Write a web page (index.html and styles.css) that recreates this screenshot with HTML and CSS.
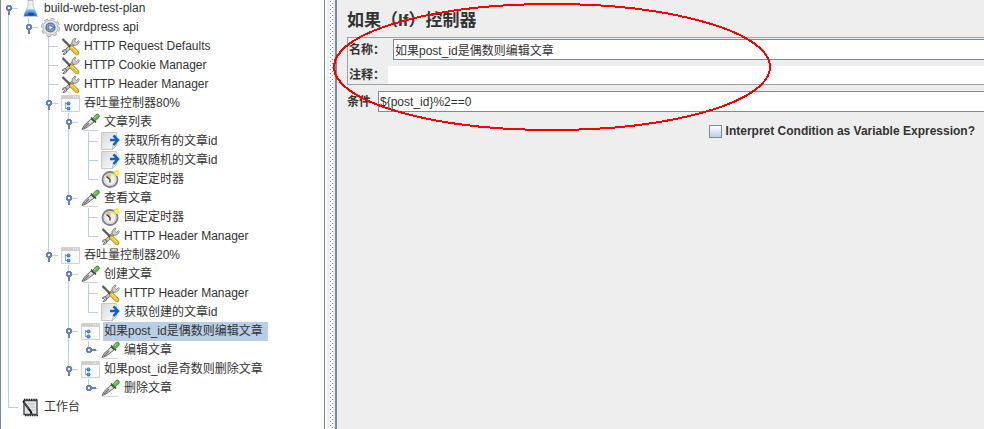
FILE: index.html
```
<!DOCTYPE html>
<html lang="zh-CN">
<head>
    <meta charset="UTF-8">
    <meta name="viewport" content="width=device-width, initial-scale=1.0">
    <title>build-web-test-plan</title>
    <link rel="stylesheet" href="styles.css">
</head>
<body>
    <!-- icon set -->
    <svg class="sprite" aria-hidden="true">
        <defs>
            <linearGradient id="page-fill" x1="0" y1="0" x2="1" y2="1">
                <stop offset="0" stop-color="#d8d8d8"/>
                <stop offset="1" stop-color="#ffffff"/>
            </linearGradient>
            <linearGradient id="flask-fill" x1="0" y1="0" x2="0" y2="1">
                <stop offset="0" stop-color="#8fc0f4"/>
                <stop offset="1" stop-color="#1767cf"/>
            </linearGradient>
        </defs>
        <symbol id="flask" viewBox="0 0 20 19">
            <path d="M3 17h14l1 1H2z" fill="#ccc"/>
            <path d="M7 1h5v6l4 9q0 1-1 1H4q-1 0-1-1l4-9z" fill="#edf2f7" stroke="#bcc8d4"/>
            <path d="M6 10h7l3 6q0 1-1 1H4q-1 0-1-1z" fill="url(#flask-fill)"/>
            <path d="M6 11q3-2 7 0" fill="none" stroke="#b9dafb"/>
            <ellipse cx="10" cy="15" rx="3" ry="1.5" fill="#0b4eae"/>
            <path d="M7 1h5" stroke="#9aa5b0"/>
        </symbol>
        <symbol id="gear" viewBox="0 0 20 19">
            <circle cx="9.5" cy="9.5" r="8" fill="none" stroke="#999" stroke-width="3" stroke-dasharray="3.6 2.68"/>
            <circle cx="9.5" cy="9.5" r="7.5" fill="#e6e6e6" stroke="#aaa"/>
            <circle cx="9.5" cy="9.5" r="8" fill="none" stroke="#dcdcdc" stroke-width="1.6" stroke-dasharray="3 3.28" stroke-dashoffset="-.3"/>
            <circle cx="9.5" cy="9.5" r="4.5" fill="#7fa0cc" stroke="#56698a" stroke-width="1.2"/>
            <path d="M8 7l4.5 2.5L8 12z" fill="#fff" stroke="#234f8e" stroke-width=".6"/>
        </symbol>
        <symbol id="tools" viewBox="0 0 20 19">
            <path d="M4 15L13 6" stroke="#666" stroke-width="3.4"/>
            <path d="M4 15L13 6" stroke="#c9c9c9" stroke-width="1.8"/>
            <path d="M11 7q-1-4 3-6l1 .5L13.5 4l2 1.5 2-2 .7 1q-1 4-5 3.8z" fill="#d0d0d0" stroke="#777" stroke-width=".8"/>
            <path d="M1 14.5q2-3 4-1.5 1.5 2-.5 4-1 .8-2.5.5l1.5-2-1-1z" fill="#ccc" stroke="#555" stroke-width=".8"/>
            <path d="M1.5 2l8 8" stroke="#222" stroke-width="2"/>
            <path d="M1.5 2l7 7" stroke="#ddd" stroke-width=".6"/>
            <path d="M10.5 10.5L16 16" stroke="#946d08" stroke-width="4.4" stroke-linecap="round"/>
            <path d="M10.5 10.5L16 16" stroke="#f6c526" stroke-width="3.2" stroke-linecap="round"/>
            <path d="M11 10l5 5" stroke="#ffe98d" stroke-width=".8"/>
        </symbol>
        <symbol id="controller" viewBox="0 0 20 19">
            <path d="M.5 1.5h18v16H.5z" fill="#fafafa" stroke="#d2d2d2"/>
            <path d="M1 2h17v3H1z" fill="#cfcfcf"/>
            <path d="M12 3h1M14 3h1M16 3h1" stroke="#fff"/>
            <path d="M4.5 8v7M4.5 9.5h2M4.5 14.5h2" fill="none" stroke="#98a6b8"/>
            <circle cx="7.5" cy="9.5" r="2" fill="#2e7ad6"/>
            <circle cx="7.5" cy="14.5" r="2" fill="#2e7ad6"/>
            <path d="M6.5 9h2M6.5 14h2" stroke="#a7cdf6" stroke-width=".8"/>
        </symbol>
        <symbol id="dropper" viewBox="0 0 20 19">
            <path d="M2 17.5h15" stroke="#d4d4d4"/>
            <path d="M1 16.5L3 12.5 10 6l3 3-8 6z" fill="#dedede" stroke="#666"/>
            <path d="M3 15L8 10" stroke="#777" stroke-width="1.5"/>
            <path d="M10 4.5l5 5" stroke="#24442a" stroke-width="1.6"/>
            <path d="M11.5 5.5L15 1.5q2-1 3 .5t-.5 3L14 8z" fill="#62b54a" stroke="#3c7f31" stroke-width=".8"/>
            <path d="M13.5 5L16 2.5" stroke="#b7e3a8"/>
        </symbol>
        <symbol id="sampler" viewBox="0 0 20 19">
            <path d="M.5 .5h15v13l-4 4H.5z" fill="url(#page-fill)" stroke="#c8c8c8"/>
            <path d="M11.5 17.5l.5-4.5 3.5.5z" fill="#eee" stroke="#aaa" stroke-width=".7"/>
            <path d="M9 8h7M12.5 3.5L17 8l-4.5 5" fill="none" stroke="#0c62cf" stroke-width="2.6"/>
        </symbol>
        <symbol id="timer" viewBox="0 0 20 19">
            <circle cx="9" cy="9.5" r="7.5" fill="#f1f0e8" stroke="#7c7c90" stroke-width="1.8"/>
            <circle cx="9" cy="9.5" r="5.8" fill="none" stroke="#cfcfcf"/>
            <path d="M9 9.5L5 5q4-2.5 5 0z" fill="#e4c76a"/>
            <path d="M5.5 6.5L9 9.5v3" fill="none" stroke="#333" stroke-width="1.2"/>
            <path d="M15.5 0v6M12.5 3h6M13.5 1l4 4M17.5 1l-4 4" stroke="#f9ea10" stroke-width="1.6"/>
            <circle cx="15.5" cy="3" r="1.2" fill="#fffbb0"/>
        </symbol>
        <symbol id="notepad" viewBox="0 0 20 19">
            <path d="M3 2.5h13v14H3z" fill="#e3e5e8" stroke="#4a4a4a" stroke-width="1.4"/>
            <path d="M3 1.5h14M4 17.5h13" stroke="#222" stroke-width="1.4" stroke-dasharray="1.5 .8"/>
            <path d="M6 6h8M6 9h8M6 12h8" stroke="#c0c5cc"/>
            <path d="M2 3l8 11 .5 2" fill="none" stroke="#1c1c1c" stroke-width="2"/>
            <path d="M3 4l5 7" stroke="#999" stroke-width=".5"/>
        </symbol>
    </svg>

    <div class="app">
        <nav class="tree-panel" aria-label="build-web-test-plan">
            <ul class="tree">
                <li class="node open">
                    <div class="row"><svg class="icon"><use href="#flask"/></svg><span class="name">build-web-test-plan</span></div>
                    <ul>
                        <li class="node open">
                            <div class="row"><svg class="icon"><use href="#gear"/></svg><span class="name">wordpress api</span></div>
                            <ul>
                                <li class="node"><div class="row"><svg class="icon"><use href="#tools"/></svg><span class="name">HTTP Request Defaults</span></div></li>
                                <li class="node"><div class="row"><svg class="icon"><use href="#tools"/></svg><span class="name">HTTP Cookie Manager</span></div></li>
                                <li class="node"><div class="row"><svg class="icon"><use href="#tools"/></svg><span class="name">HTTP Header Manager</span></div></li>
                                <li class="node open">
                                    <div class="row"><svg class="icon"><use href="#controller"/></svg><span class="name">吞吐量控制器80%</span></div>
                                    <ul>
                                        <li class="node open">
                                            <div class="row"><svg class="icon"><use href="#dropper"/></svg><span class="name">文章列表</span></div>
                                            <ul>
                                                <li class="node"><div class="row"><svg class="icon"><use href="#sampler"/></svg><span class="name">获取所有的文章id</span></div></li>
                                                <li class="node"><div class="row"><svg class="icon"><use href="#sampler"/></svg><span class="name">获取随机的文章id</span></div></li>
                                                <li class="node"><div class="row"><svg class="icon"><use href="#timer"/></svg><span class="name">固定定时器</span></div></li>
                                            </ul>
                                        </li>
                                        <li class="node open">
                                            <div class="row"><svg class="icon"><use href="#dropper"/></svg><span class="name">查看文章</span></div>
                                            <ul>
                                                <li class="node"><div class="row"><svg class="icon"><use href="#timer"/></svg><span class="name">固定定时器</span></div></li>
                                                <li class="node"><div class="row"><svg class="icon"><use href="#tools"/></svg><span class="name">HTTP Header Manager</span></div></li>
                                            </ul>
                                        </li>
                                    </ul>
                                </li>
                                <li class="node open">
                                    <div class="row"><svg class="icon"><use href="#controller"/></svg><span class="name">吞吐量控制器20%</span></div>
                                    <ul>
                                        <li class="node open">
                                            <div class="row"><svg class="icon"><use href="#dropper"/></svg><span class="name">创建文章</span></div>
                                            <ul>
                                                <li class="node"><div class="row"><svg class="icon"><use href="#tools"/></svg><span class="name">HTTP Header Manager</span></div></li>
                                                <li class="node"><div class="row"><svg class="icon"><use href="#sampler"/></svg><span class="name">获取创建的文章id</span></div></li>
                                            </ul>
                                        </li>
                                        <li class="node open">
                                            <div class="row"><svg class="icon"><use href="#controller"/></svg><span class="name selected">如果post_id是偶数则编辑文章</span></div>
                                            <ul>
                                                <li class="node closed"><div class="row"><svg class="icon"><use href="#dropper"/></svg><span class="name">编辑文章</span></div></li>
                                            </ul>
                                        </li>
                                        <li class="node open">
                                            <div class="row"><svg class="icon"><use href="#controller"/></svg><span class="name">如果post_id是奇数则删除文章</span></div>
                                            <ul>
                                                <li class="node closed"><div class="row"><svg class="icon"><use href="#dropper"/></svg><span class="name">删除文章</span></div></li>
                                            </ul>
                                        </li>
                                    </ul>
                                </li>
                            </ul>
                        </li>
                    </ul>
                </li>
                <li class="node"><div class="row"><svg class="icon"><use href="#notepad"/></svg><span class="name">工作台</span></div></li>
            </ul>
        </nav>
        <div class="divider"></div>
        <main class="editor">
            <h1>如果（If）控制器</h1>
            <form action="javascript:void(0);">
                <div class="group">
                    <div class="field field-name">
                        <label for="name">名称：</label>
                        <input type="text" id="name" value="如果post_id是偶数则编辑文章">
                    </div>
                    <div class="field field-comment">
                        <label for="comment">注释：</label>
                        <input type="text" id="comment">
                    </div>
                </div>
                <div class="field field-condition">
                    <label for="condition">条件</label>
                    <input type="text" id="condition" value="${post_id}%2==0">
                </div>
                <div class="option">
                    <input type="checkbox" id="interpret">
                    <label for="interpret">Interpret Condition as Variable Expression?</label>
                </div>
            </form>
            <svg class="marker" viewBox="0 0 438 128" aria-hidden="true">
                <ellipse cx="219" cy="64" rx="218" ry="63"/>
            </svg>
        </main>
    </div>
</body>
</html>
```

FILE: styles.css
```
* { margin: 0; padding: 0; box-sizing: border-box; }
body { font-family: "Liberation Sans", "Noto Sans CJK SC", sans-serif; font-size: 12px; color: #333; background: #eee; overflow: hidden; }
ul { list-style: none; }
.sprite { position: absolute; width: 0; height: 0; }
.app { display: flex; min-height: 100vh; }

/* test plan tree */
.tree-panel { flex: 0 0 325px; background: #fff; border-left: 1px solid #7a8a99; border-right: 1px solid #7a8a99; overflow: hidden; }
.tree { margin: -1px 0 0 -1px; }
.tree ul { padding-left: 20px; }
.node { position: relative; }
.node::before { content: ''; position: absolute; left: 8px; top: 0; bottom: 0; width: 1px; background: #b8cfe5; }
.node:last-child::before { bottom: auto; height: 10px; }
.tree > .node:first-child::before { top: 9px; }
.row { position: relative; display: flex; align-items: center; gap: 2px; height: 19px; padding-left: 21px; }
.row::before { content: ''; position: absolute; left: 8px; top: 9px; width: 10px; height: 1px; background: #b8cfe5; }
.icon { flex: none; width: 20px; height: 19px; }
.name { height: 19px; line-height: 18px; padding: 0 5px 0 1px; white-space: nowrap; }
.selected { background: #b8cfe5; }

/* expand handles: ring + stem */
.open > .row::after, .closed > .row::after { content: ''; position: absolute; left: 6px; top: 6px; width: 6px; height: 10px; background: radial-gradient(circle at 3px 3px, #fff 1px, #6382bf 1px, #6382bf 3px, transparent 3px) 0 0 / 6px 6px no-repeat, linear-gradient(#6382bf, #6382bf) 2px 5px / 2px 5px no-repeat; }
.closed > .row::after { width: 11px; height: 6px; background: radial-gradient(circle at 3px 3px, #fff 1px, #6382bf 1px, #6382bf 3px, transparent 3px) 0 0 / 6px 6px no-repeat, linear-gradient(#6382bf, #6382bf) 5px 2px / 5px 2px no-repeat; }

/* split bar with bumps */
.divider { position: relative; flex: 0 0 12px; border-left: 2px solid #fff; border-right: 2px solid #7a8a99; background: #eee; }
.divider::before { content: ''; position: absolute; left: 2px; top: 0; bottom: 0; width: 4px; background: conic-gradient(from 0deg at 1px 1px, transparent 75%, #7a8a99 0) 1px 1px / 4px 4px, conic-gradient(from 0deg at 1px 1px, transparent 75%, #7a8a99 0) 3px 3px / 4px 4px, #fff; }

/* controller editor */
.editor { position: relative; flex: 1; min-width: 0; padding: 9px 0 0 10px; }
h1 { font-size: 17px; line-height: 24px; font-weight: bold; margin-bottom: 4px; white-space: nowrap; }
.group { border: 1px solid #a0a0a0; border-right: 0; padding: 1px 0 0 1px; margin-bottom: 6px; }
.field { display: flex; align-items: center; }
.field label { flex: none; font-weight: bold; line-height: 18px; }
.field input { flex: 1; min-width: 0; height: 21px; padding: 0 1px; border: 1px solid #7a8a99; border-right: 0; background: #fff; font: inherit; color: #333; outline: none; }
.field-name { gap: 8px; margin-bottom: 6px; }
.field-comment { gap: 3px; }
.field-comment input { height: 18px; border: 0; }
.field-condition { gap: 7px; }
.option { display: flex; justify-content: flex-end; align-items: center; gap: 4px; padding: 11px 9px 0 0; line-height: 16px; font-weight: bold; }
.option input { appearance: none; width: 13px; height: 13px; border: 1px solid #7a8a99; background: linear-gradient(#fff, #b8cfe5); }

/* red ring drawn over the form */
.marker { position: absolute; left: -4px; top: 3px; width: 438px; height: 128px; pointer-events: none; }
.marker ellipse { fill: none; stroke: #f00; stroke-width: 2; shape-rendering: crispEdges; }
```
